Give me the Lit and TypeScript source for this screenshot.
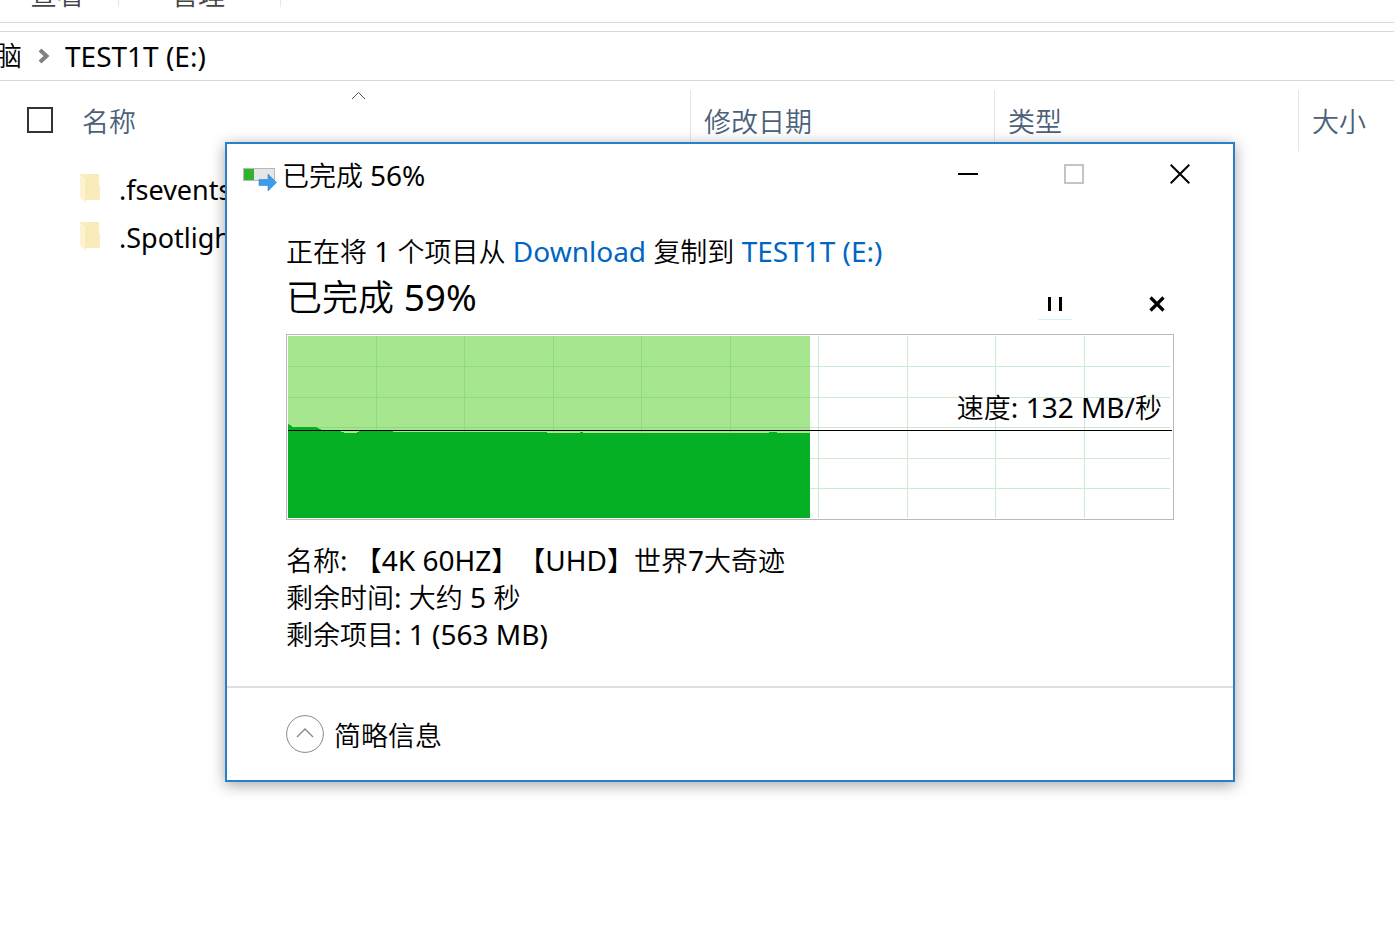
import { LitElement, html, css, svg } from "lit";
import { customElement, property } from "lit/decorators.js";

const GRID_X = [88, 176, 265, 353, 442, 530, 619, 707, 796];
const GRID_Y = [30, 61, 91, 122, 152];

@customElement("speed-chart")
class SpeedChart extends LitElement {
  @property() speed = "";

  static styles = css`
    :host {
      display: block;
      position: relative;
      border: 1px solid #b9b9b9;
      padding: 1px;
      height: 182px;
    }
    .plot {
      display: block;
      width: 100%;
      height: 100%;
    }
    .label {
      position: absolute;
      right: 11px;
      bottom: 93px;
      line-height: 36px;
      white-space: nowrap;
    }
    .latin {
      font-size: 28px;
      font-weight: 400;
      line-height: 1;
    }
  `;

  render() {
    return html`
      <svg class="plot" viewBox="0 0 884 182" preserveAspectRatio="none" shape-rendering="crispEdges" aria-hidden="true">
        <rect width="522" height="182" fill="#a6e68f" />
        ${GRID_X.map((x) => svg`<rect x=${x} y="0" width="1" height="182" fill=${x < 522 ? "#91d883" : "#c9ead3"} />`)}
        ${GRID_Y.map(
          (y) => svg`<rect x="0" y=${y} width="522" height="1" fill="#91d883" /><rect x="522" y=${y} width="360" height="1" fill="#c9ead3" />`,
        )}
        <path
          d="M0 88 L2 89 L5 91 H28 L34 94 H48 L54 96 L57 97 H68 L72 95 H105 V96 H258 L260 97 H292 V96 H295 V97 H481 V96 H489 V97 H522 V182 H0Z"
          fill="#06b025"
        />
        <rect x="0" y="94" width="884" height="1" fill="#000" />
      </svg>
      <div class="label">速度<span class="latin">: ${this.speed}/</span>秒</div>
    `;
  }
}

@customElement("copy-dialog")
class CopyDialog extends LitElement {
  static styles = css`
    :host {
      display: block;
      box-sizing: border-box;
      background: #fff;
      border: 2px solid #2a80c6;
      box-shadow: 0 3px 14px rgba(0, 0, 0, 0.36);
    }
    button {
      font: inherit;
      color: inherit;
      background: none;
      border: 0;
      padding: 0;
      display: flex;
      align-items: center;
      justify-content: center;
    }
    svg {
      display: block;
      flex: none;
    }
    a {
      color: #0066c4;
      text-decoration: none;
    }
    .latin,
    a {
      font-size: 28px;
      font-weight: 400;
      line-height: 1;
    }
    .titlebar {
      display: flex;
      height: 60px;
      padding-left: 16px;
    }
    .title {
      flex: 1;
      display: flex;
      align-items: center;
      gap: 5px;
    }
    .window-button {
      width: 106px;
      height: 60px;
    }
    .body {
      padding: 29px 59px 33px;
    }
    .line {
      margin: 0;
      line-height: 37px;
    }
    .progress {
      display: flex;
      align-items: flex-end;
      justify-content: space-between;
      height: 54px;
    }
    .percent {
      margin: 0;
      font-size: 36px;
      font-weight: inherit;
      line-height: 52px;
    }
    .percent .latin {
      font-size: 37px;
    }
    .actions {
      display: flex;
      gap: 68px;
      padding-bottom: 4px;
    }
    .action {
      width: 34px;
      height: 32px;
      border-bottom: 1px solid transparent;
    }
    .pause {
      border-bottom-color: #d5f0fa;
    }
    speed-chart {
      margin: 10px 0 22px;
    }
    .footer {
      border-top: 2px solid #dfdfdf;
      height: 92px;
      padding: 0 59px;
      display: flex;
      align-items: center;
    }
    .toggle {
      gap: 10px;
    }
  `;

  render() {
    return html`
      <header class="titlebar">
        <div class="title">
          <svg width="34" height="38" viewBox="0 -8 34 38" aria-hidden="true">
            <rect x="0.5" y="5.500" width="31" height="12" fill="#e6e6e6" stroke="#b8b8b8" />
            <rect x="1" y="6" width="10" height="11" fill="#2db52d" />
            <path d="M16 16.500h9v-5.500l8.500 8.500-8.500 8.500v-5.500h-9z" fill="#3f9cea" stroke="#2f86d2" stroke-width=".6" />
          </svg>
          <span>已完成 <span class="latin">56%</span></span>
        </div>
        <button class="window-button" type="button" aria-label="最小化">
          <svg width="20" height="20"><path d="M0 10h20" stroke="#000" stroke-width="2" /></svg>
        </button>
        <button class="window-button" type="button" aria-label="最大化" disabled>
          <svg width="20" height="20"><rect x="1" y="1" width="18" height="18" fill="none" stroke="#c4c4c4" stroke-width="2" /></svg>
        </button>
        <button class="window-button" type="button" aria-label="关闭">
          <svg width="20" height="20"><path d="M.7.7l18.600 18.600M19.300.7L.7 19.300" stroke="#000" stroke-width="2" /></svg>
        </button>
      </header>
      <section class="body">
        <p class="line">
          正在将<span class="latin"> 1 </span>个项目从<span class="latin"> <a href="#download">Download</a> </span>复制到<span class="latin"> <a href="#test1t">TEST1T (E:)</a></span>
        </p>
        <div class="progress">
          <h1 class="percent">已完成<span class="latin"> 59%</span></h1>
          <div class="actions">
            <button class="action pause" type="button" aria-label="暂停">
              <svg width="16" height="16"><path d="M2.500 1v14M13.500 1v14" stroke="#000" stroke-width="3" /></svg>
            </button>
            <button class="action" type="button" aria-label="取消">
              <svg width="16" height="16"><path d="M1.500 1.500l13 13M14.500 1.500l-13 13" stroke="#000" stroke-width="3.200" /></svg>
            </button>
          </div>
        </div>
        <speed-chart speed="132 MB"></speed-chart>
        <p class="line">
          名称<span class="latin">: </span>【<span class="latin">4K 60HZ</span>】【<span class="latin">UHD</span>】世界<span class="latin">7</span>大奇迹
        </p>
        <p class="line">剩余时间<span class="latin">: </span>大约<span class="latin"> 5 </span>秒</p>
        <p class="line">剩余项目<span class="latin">: 1 (563 MB)</span></p>
      </section>
      <footer class="footer">
        <button class="toggle" type="button">
          <svg width="38" height="38" viewBox="0 0 38 38" fill="none" aria-hidden="true">
            <circle cx="19" cy="19" r="18.400" stroke="#8a8a8a" />
            <path d="M11 22l8-8 8 8" stroke="#8a8a8a" stroke-width="1.400" />
          </svg>
          简略信息
        </button>
      </footer>
    `;
  }
}

@customElement("app-root")
class AppRoot extends LitElement {
  static styles = css`
    :host {
      display: block;
      position: relative;
      min-height: 100vh;
      overflow: hidden;
      background: #fff;
      color: #000;
      font-family: "Noto Sans", "Noto Sans CJK SC", sans-serif;
      font-size: 27px;
      font-weight: 350;
      text-spacing-trim: space-all;
    }
    .ribbon {
      display: flex;
      align-items: flex-end;
      height: 22px;
      border-bottom: 1px solid #dadada;
      color: #444;
    }
    .tab {
      color: inherit;
      text-decoration: none;
      line-height: 24px;
      margin-bottom: 15px;
      padding: 0 55px 0 52px;
      border-right: 1px solid #e6e6e6;
    }
    .tab:first-child {
      padding: 0 34px 0 30px;
    }
    .address {
      display: flex;
      align-items: center;
      gap: 16px;
      height: 48px;
      margin-top: 8px;
      border: solid #d9d9d9;
      border-width: 1px 0;
    }
    .address a {
      color: inherit;
      text-decoration: none;
      line-height: 36px;
    }
    .parent {
      width: 22px;
      display: flex;
      justify-content: flex-end;
      white-space: nowrap;
    }
    .latin {
      font-size: 28px;
      font-weight: 400;
    }
    .files {
      width: 100%;
      table-layout: fixed;
      border-collapse: collapse;
    }
    .col-name {
      width: 690px;
    }
    .col-mid {
      width: 304px;
    }
    th {
      height: 70px;
      padding: 0;
      text-align: left;
      font-weight: inherit;
      color: #4c607a;
    }
    .head {
      display: flex;
      align-items: center;
      box-sizing: border-box;
      height: 61px;
      margin-top: 9px;
      padding: 0 0 1px 13px;
      border-left: 1px solid #e5e5e5;
    }
    .head-name {
      position: relative;
      gap: 29px;
      padding-left: 27px;
      border-left: 0;
    }
    .sort {
      position: absolute;
      left: 351px;
      top: 1px;
    }
    input {
      appearance: none;
      width: 26px;
      height: 26px;
      margin: 0;
      border: 2px solid #333;
      background: #fff;
    }
    tbody::before {
      content: "";
      display: block;
      height: 14px;
    }
    td {
      height: 48px;
      padding: 0;
    }
    .file {
      display: flex;
      align-items: center;
      gap: 19px;
      padding-left: 80px;
      font-weight: 400;
    }
    .dialog {
      position: absolute;
      top: 142px;
      left: 225px;
      right: 159px;
    }
  `;

  private files = [".fseventsd", ".Spotlight-V100"];

  render() {
    return html`
      <nav class="ribbon">
        <a class="tab" href="#view">查看</a>
        <a class="tab" href="#manage">管理</a>
      </nav>
      <nav class="address">
        <a class="parent" href="#computer">此电脑</a>
        <svg width="11" height="16" viewBox="0 0 11 16" aria-hidden="true"><path d="M2 2l6.500 6L2 14" fill="none" stroke="#808080" stroke-width="4" /></svg>
        <a class="latin" href="#test1t">TEST1T (E:)</a>
      </nav>
      <table class="files">
        <colgroup>
          <col class="col-name" />
          <col class="col-mid" />
          <col class="col-mid" />
          <col />
        </colgroup>
        <thead>
          <tr>
            <th>
              <div class="head head-name">
                <input id="all" type="checkbox" />
                <label for="all">名称</label>
                <svg class="sort" width="15" height="9" aria-hidden="true"><path d="M1 8l6.500-6.500L14 8" fill="none" stroke="#555" /></svg>
              </div>
            </th>
            <th><div class="head">修改日期</div></th>
            <th><div class="head">类型</div></th>
            <th><div class="head">大小</div></th>
          </tr>
        </thead>
        <tbody>
          ${this.files.map(
            (name) => html`<tr>
              <td colspan="4">
                <div class="file">
                  <svg width="20" height="30" viewBox="0 0 20 30" aria-hidden="true">
                    <path d="M1 0h18v12l1 1v13H6L0 24V1z" fill="#faebba" />
                    <path d="M0 1l6 4v24l-6-5z" fill="#fdf3d3" />
                    <path d="M6 5v21" stroke="#f3dfa4" stroke-width=".8" />
                  </svg>
                  ${name}
                </div>
              </td>
            </tr>`,
          )}
        </tbody>
      </table>
      <copy-dialog class="dialog" role="dialog"></copy-dialog>
    `;
  }
}
